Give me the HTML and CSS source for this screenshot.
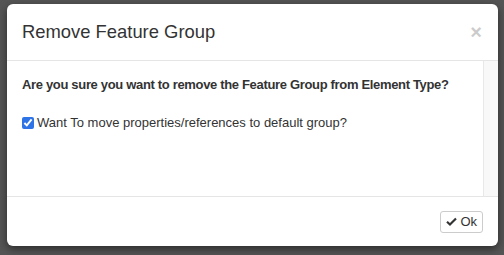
FILE: index.html
```html
<!DOCTYPE html>
<html lang="en">
<head>
    <meta charset="UTF-8">
    <title>Remove Feature Group</title>
    <link rel="stylesheet" href="styles.css">
</head>
<body>
    <div class="backdrop">
        <div class="modal">
            <div class="modal-header">
                <h4 class="modal-title">Remove Feature Group</h4>
                <button type="button" class="close">&times;</button>
            </div>
            <div class="modal-body">
                <div class="body-content">
                    <p class="question">Are you sure you want to remove the Feature Group from Element Type?</p>
                    <label class="check-row">
                        <input type="checkbox" checked>
                        <span>Want To move properties/references to default group?</span>
                    </label>
                </div>
                <div class="scroll-track"></div>
            </div>
            <div class="modal-footer">
                <button type="button" class="btn">
                    <svg class="icon-check" viewBox="0 0 12 10" width="11" height="9"><path d="M1 5.2 L4.3 8.3 L11 1.6" fill="none" stroke="#333" stroke-width="2.4"/></svg>
                    Ok
                </button>
            </div>
        </div>
    </div>
</body>
</html>
```

FILE: styles.css
```css
body {
    margin: 0;
    font-family: 'Liberation Sans', Arial, sans-serif;
    color: #333;
    background: #555555;
    height: 255px;
    overflow: hidden;
}

.backdrop {
    padding: 4px 6px 0 7px;
}

.modal {
    width: 491px;
    background: #fff;
    border-radius: 6px;
    box-shadow: 0 3px 9px rgba(0, 0, 0, 0.5);
    display: flex;
    flex-direction: column;
}

.modal-header {
    height: 57px;
    box-sizing: border-box;
    padding: 0 15px;
    display: flex;
    align-items: center;
    justify-content: space-between;
    border-bottom: 1px solid #e5e5e5;
}

.modal-title {
    margin: 0;
    font-size: 18.4px;
    font-weight: 400;
    line-height: 1.1;
    color: #333;
}

.close {
    background: none;
    border: none;
    padding: 0;
    margin-right: 1px;
    font-size: 20px;
    font-weight: 700;
    line-height: 1;
    color: #000;
    opacity: 0.2;
    font-family: 'Liberation Sans', Arial, sans-serif;
}

.modal-body {
    height: 135px;
    display: flex;
    border-bottom: 1px solid #e5e5e5;
}

.body-content {
    flex-grow: 1;
    padding: 14px 0 14px 15px;
    font-size: 13px;
}

.question {
    margin: 0 0 20px;
    font-weight: 700;
    line-height: 19px;
    letter-spacing: -0.33px;
    white-space: nowrap;
}

.check-row {
    display: flex;
    align-items: center;
    line-height: 18px;
}

.check-row input {
    margin: 0 3px 0 0;
    width: 12px;
    height: 12px;
    accent-color: #2f74e6;
}

.scroll-track {
    width: 14px;
    background: #f8f8f8;
    border-left: 1px solid #e8e8e8;
}

.modal-footer {
    height: 49px;
    box-sizing: border-box;
    padding: 0 15px;
    display: flex;
    align-items: center;
    justify-content: flex-end;
}

.btn {
    height: 22px;
    padding: 0 5px;
    background: #fff;
    border: 1px solid #ccc;
    border-radius: 3px;
    font-family: 'Liberation Sans', Arial, sans-serif;
    font-size: 13px;
    color: #333;
    display: flex;
    align-items: center;
    gap: 3px;
}
```
